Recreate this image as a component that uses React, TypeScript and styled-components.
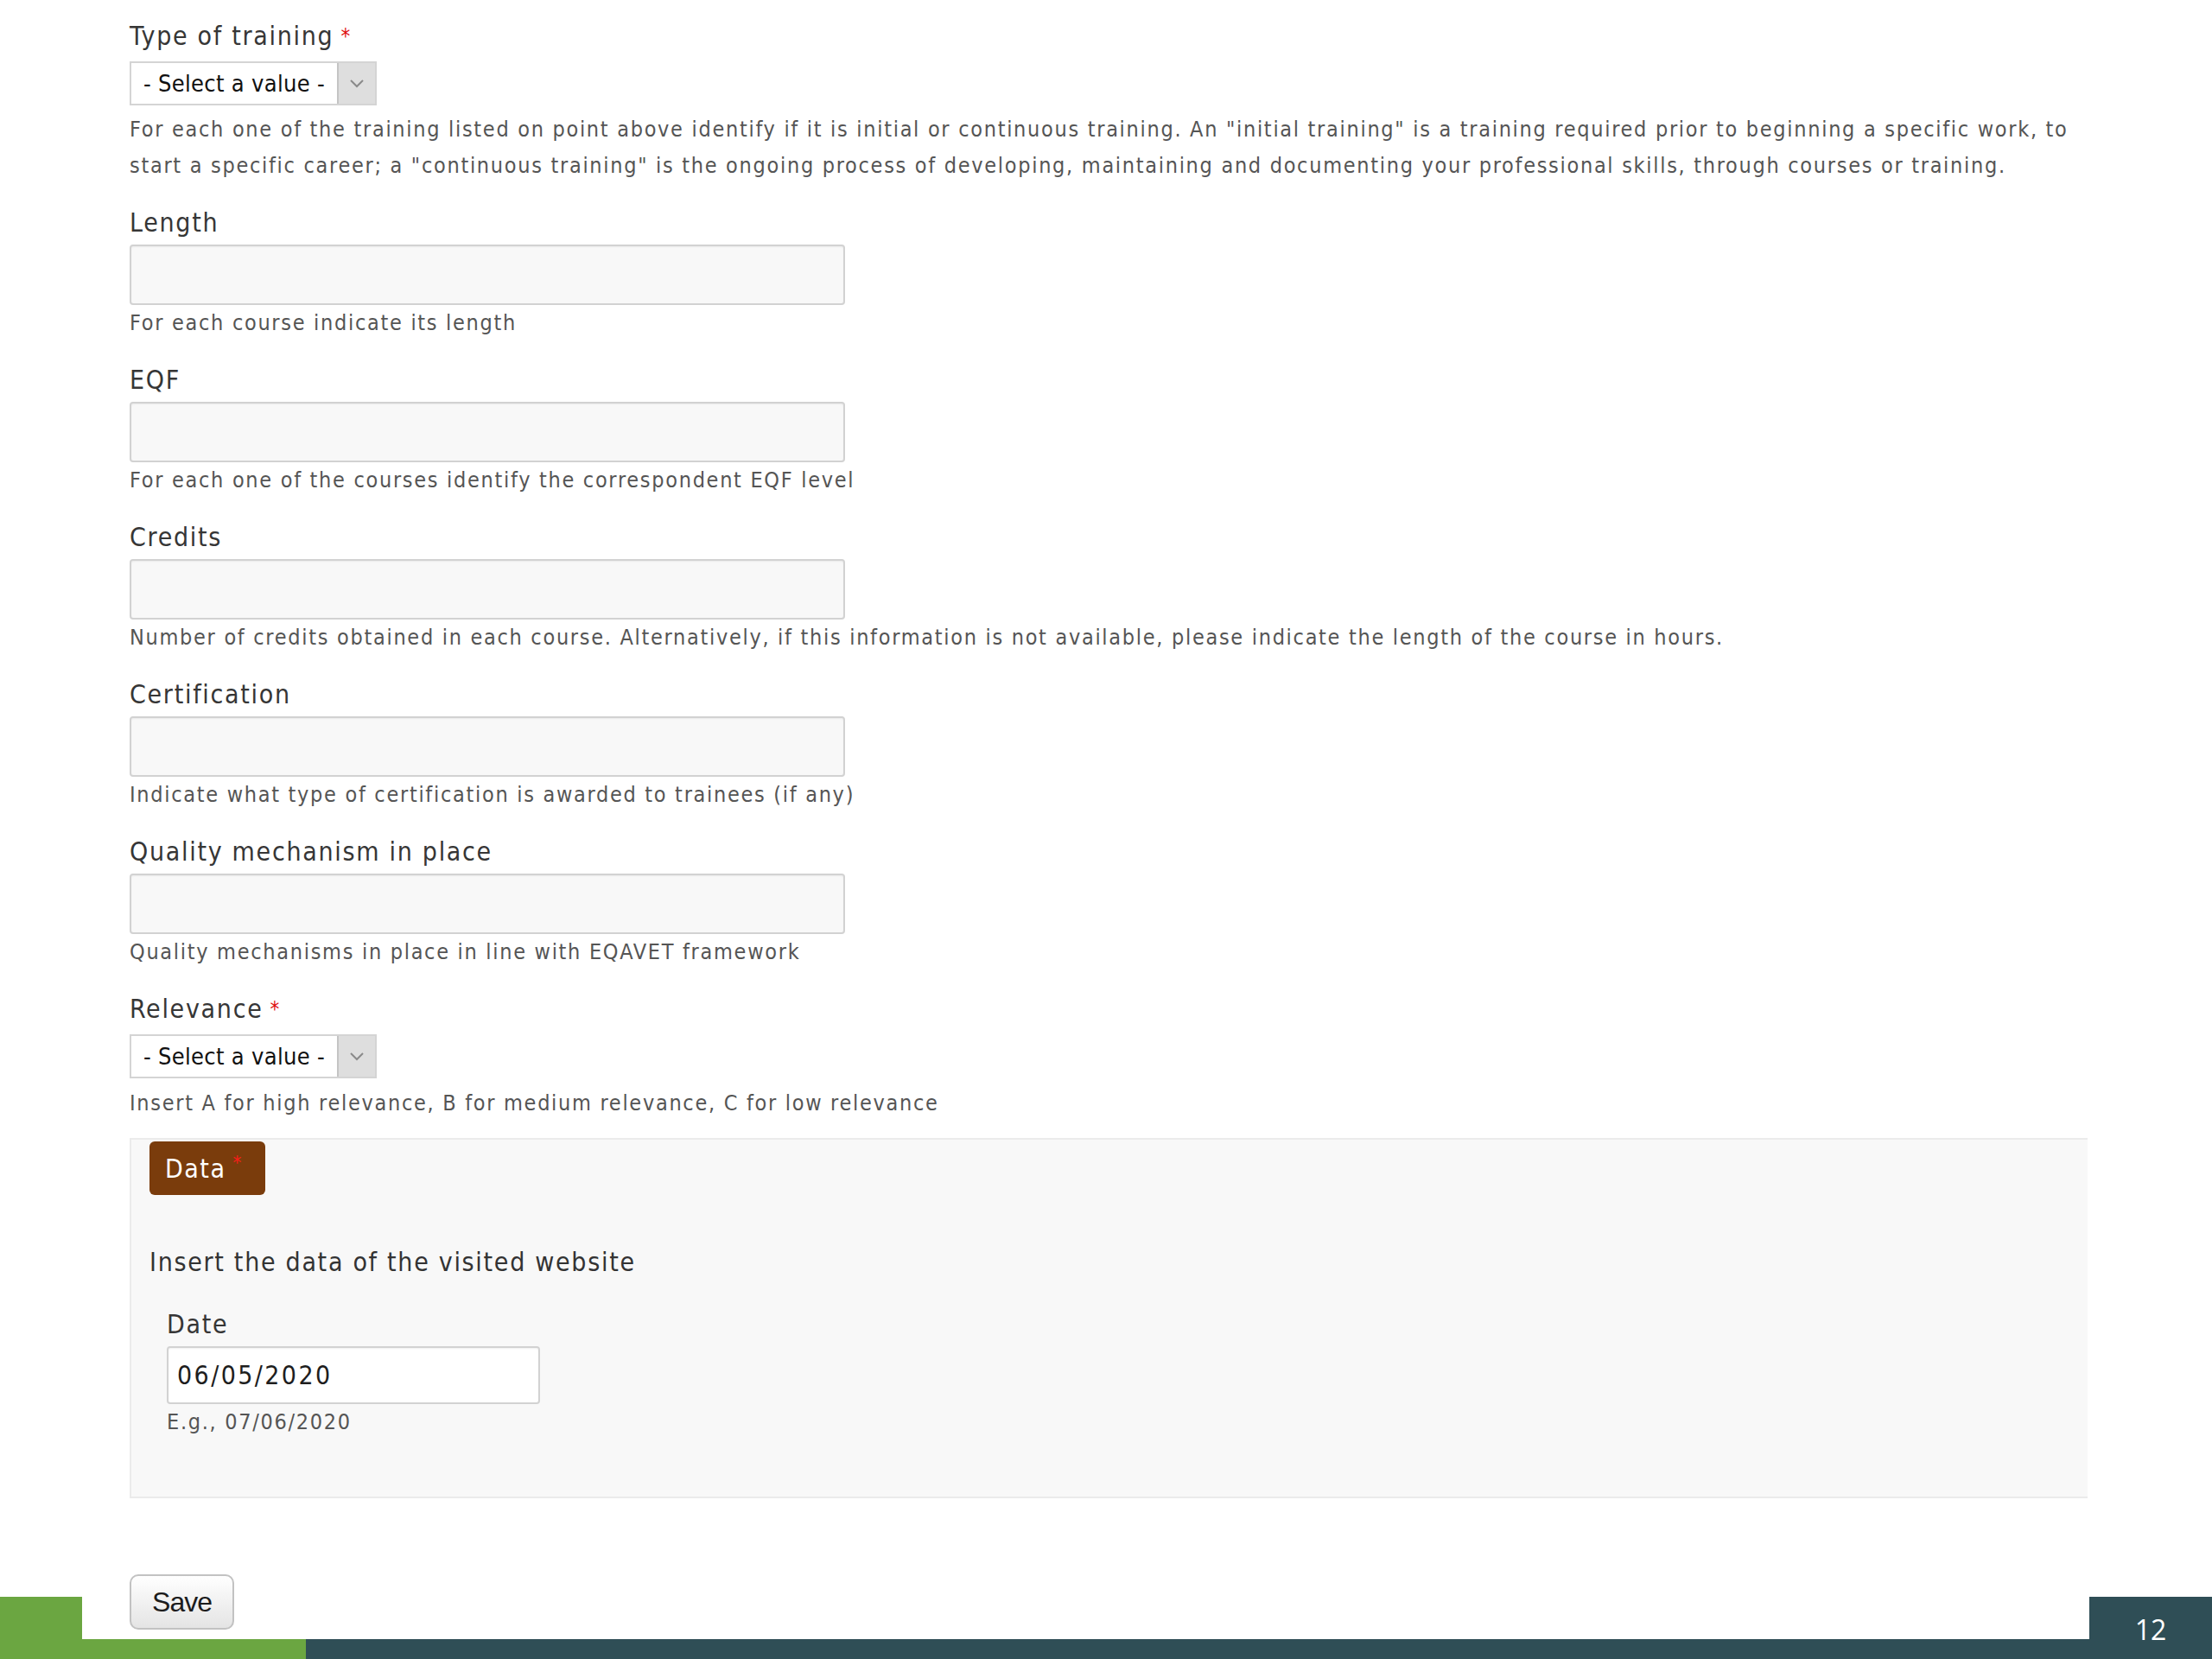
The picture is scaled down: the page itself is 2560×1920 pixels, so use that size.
import React from "react";
import styled, { createGlobalStyle } from "styled-components";

const GlobalStyle = createGlobalStyle`
  html, body { margin: 0; padding: 0; background: #ffffff; }
  * { box-sizing: border-box; }
`;

const FORM_FONT = `"DejaVu Sans Condensed", "DejaVu Sans", sans-serif`;

const Slide = styled.div`
  display: grid;
  width: 2560px;
  height: 1920px;
  overflow: hidden;
  background: #ffffff;
`;

const Content = styled.div`
  grid-area: 1 / 1;
  align-self: start;
  padding: 24px 144px 0 150px;
  font-family: ${FORM_FONT};
  color: #333333;
`;

const Item = styled.div`
  display: flex;
  flex-direction: column;
  align-items: flex-start;
  margin-bottom: 27px;
`;

const Label = styled.div`
  font-size: 30px;
  line-height: 36px;
  letter-spacing: 1.7px;
  color: #363636;
  white-space: nowrap;
`;

const Required = styled.span`
  color: #e01010;
  font-size: 24px;
  vertical-align: top;
  margin-left: 8px;
`;

const SelectBox = styled.div<{ $top: number }>`
  display: flex;
  margin-top: ${(p) => p.$top}px;
  width: 286px;
  height: 51px;
  border: 2px solid #d4d4d4;
  background: #ffffff;
`;

const SelectText = styled.div`
  flex: 1;
  display: flex;
  align-items: center;
  padding-left: 14px;
  font-size: 27px;
  color: #111111;
  letter-spacing: 0.3px;
  white-space: nowrap;
`;

const SelectArrow = styled.div`
  width: 44px;
  display: flex;
  align-items: center;
  justify-content: center;
  background: #dedede;
  border-left: 2px solid #c4c4c4;
`;

const TextInput = styled.div<{ $w: number; $h: number; $bg: string }>`
  margin-top: 7px;
  width: ${(p) => p.$w}px;
  height: ${(p) => p.$h}px;
  border: 2px solid #d2d2d2;
  border-radius: 4px;
  background: ${(p) => p.$bg};
  box-shadow: inset 0 1px 2px rgba(0, 0, 0, 0.06);
  display: flex;
  align-items: center;
  padding-left: 10px;
  font-size: 30px;
  letter-spacing: 2.4px;
  color: #1e1e1e;
`;

const Help = styled.div<{ $top?: number }>`
  margin-top: ${(p) => p.$top ?? 0}px;
  font-size: 25px;
  line-height: 42px;
  letter-spacing: 1.7px;
  color: #555555;
  white-space: nowrap;
`;

const Panel = styled.div`
  margin-top: 19px;
  height: 417px;
  border: 2px solid #ebebeb;
  border-right: none;
  background: #f8f8f8;
  padding: 2px 0 0 21px;
`;

const Legend = styled.div`
  display: inline-flex;
  align-items: center;
  min-width: 134px;
  height: 62px;
  padding: 0 16px 0 18px;
  border-radius: 6px;
  background: #7a3c0c;
  color: #ffffff;
  font-size: 30px;
  letter-spacing: 1.5px;
`;

const LegendStar = styled.span`
  color: #ff1a1a;
  font-size: 22px;
  align-self: flex-start;
  margin-top: 12px;
  margin-left: 8px;
`;

const PanelIntro = styled.div`
  margin-top: 60px;
  font-size: 30px;
  line-height: 36px;
  letter-spacing: 1.7px;
  color: #333333;
`;

const DateBlock = styled.div`
  margin-top: 36px;
  padding-left: 20px;
  display: flex;
  flex-direction: column;
  align-items: flex-start;
`;

const SaveButton = styled.button`
  margin-top: 88px;
  width: 121px;
  height: 64px;
  border: 2px solid #c2c2c2;
  border-radius: 10px;
  background: linear-gradient(#ffffff, #e4e4e4);
  font-family: "Liberation Sans", Arial, sans-serif;
  font-size: 32px;
  color: #1c1c1c;
  letter-spacing: -1px;
  padding: 0;
`;

const Footer = styled.div`
  grid-area: 1 / 1;
  align-self: end;
  display: flex;
  align-items: flex-end;
  height: 72px;
`;

const FooterBlock = styled.div<{ $w: number; $h: number; $color: string }>`
  width: ${(p) => p.$w}px;
  height: ${(p) => p.$h}px;
  background: ${(p) => p.$color};
  flex: none;
`;

const FooterBar = styled.div`
  flex: 1;
  height: 23px;
  background: #2f4e56;
`;

const PageNumber = styled.div`
  width: 142px;
  height: 72px;
  background: #2f4e56;
  color: #ffffff;
  display: flex;
  align-items: center;
  justify-content: center;
  padding-top: 2px;
  font-family: "Open Sans", sans-serif;
  font-size: 32px;
`;

const Chevron = () => (
  <svg width="18" height="12" viewBox="0 0 18 12">
    <path d="M2 2 L9 9 L16 2" fill="none" stroke="#8a8a8a" strokeWidth="2" />
  </svg>
);

const Select = ({ top }: { top: number }) => (
  <SelectBox $top={top}>
    <SelectText>- Select a value -</SelectText>
    <SelectArrow>
      <Chevron />
    </SelectArrow>
  </SelectBox>
);

const fields = [
  { label: "Length", help: "For each course indicate its length" },
  { label: "EQF", help: "For each one of the courses identify the correspondent EQF level" },
  {
    label: "Credits",
    help: "Number of credits obtained in each course. Alternatively, if this information is not available, please indicate the length of the course in hours.",
  },
  { label: "Certification", help: "Indicate what type of certification is awarded to trainees (if any)" },
  { label: "Quality mechanism in place", help: "Quality mechanisms in place in line with EQAVET framework" },
];

export default function App() {
  return (
    <>
      <GlobalStyle />
      <Slide>
        <Content>
          <Item>
            <Label>
              Type of training<Required>*</Required>
            </Label>
            <Select top={11} />
            <Help $top={7}>
              For each one of the training listed on point above identify if it is initial or continuous training. An "initial training" is a training required prior to beginning a specific work, to
              <br />
              start a specific career; a "continuous training" is the ongoing process of developing, maintaining and documenting your professional skills, through courses or training.
            </Help>
          </Item>
          {fields.map((f) => (
            <Item key={f.label}>
              <Label>{f.label}</Label>
              <TextInput $w={828} $h={70} $bg="#f8f8f8" />
              <Help>{f.help}</Help>
            </Item>
          ))}
          <Item style={{ marginBottom: 0 }}>
            <Label>
              Relevance<Required>*</Required>
            </Label>
            <Select top={11} />
            <Help $top={8}>Insert A for high relevance, B for medium relevance, C for low relevance</Help>
          </Item>
          <Panel>
            <Legend>
              Data<LegendStar>*</LegendStar>
            </Legend>
            <PanelIntro>Insert the data of the visited website</PanelIntro>
            <DateBlock>
              <Label>Date</Label>
              <TextInput $w={432} $h={67} $bg="#ffffff">06/05/2020</TextInput>
              <Help>E.g., 07/06/2020</Help>
            </DateBlock>
          </Panel>
          <SaveButton>Save</SaveButton>
        </Content>
        <Footer>
          <FooterBlock $w={95} $h={72} $color="#6ba641" />
          <FooterBlock $w={259} $h={23} $color="#6ba641" />
          <FooterBar />
          <PageNumber>12</PageNumber>
        </Footer>
      </Slide>
    </>
  );
}
